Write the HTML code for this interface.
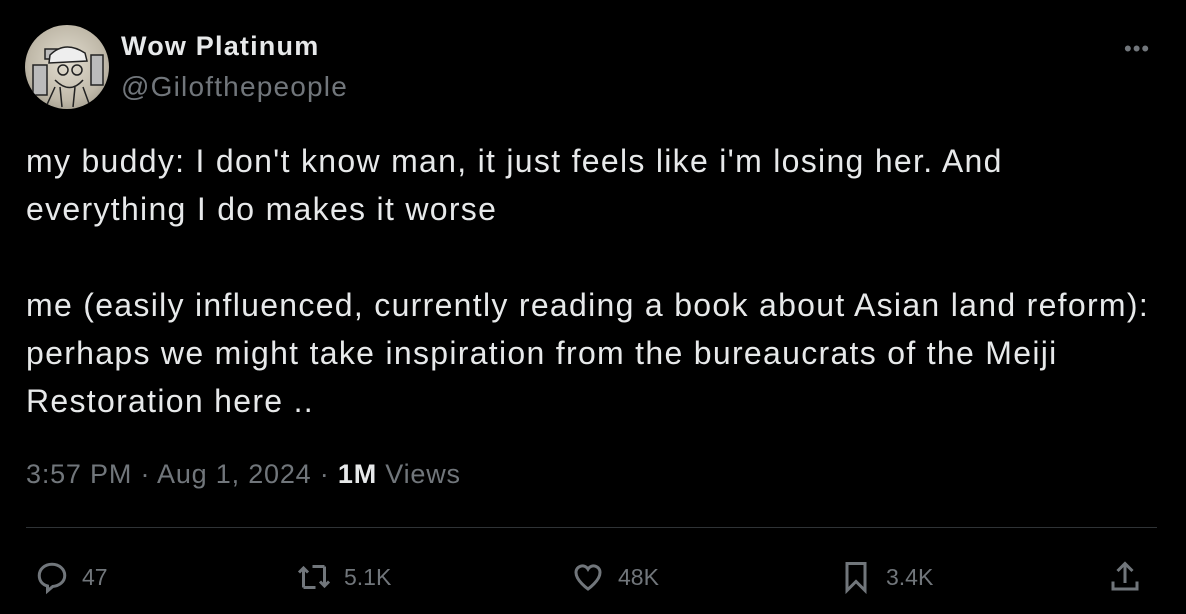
<!DOCTYPE html>
<html><head><meta charset="utf-8"><style>
body{margin:0;background:#000;width:1186px;height:614px;overflow:hidden;font-family:"Liberation Sans",sans-serif;position:relative}
.abs{position:absolute;white-space:nowrap}
.av{left:25px;top:25px;width:84px;height:84px;border-radius:50%;background:radial-gradient(circle at 50% 45%,#e2ddd0,#c0b9a9 60%,#8a8578);overflow:hidden}
.name{left:121px;top:31px;color:#e7e9ea;font-weight:bold;font-size:27px;letter-spacing:1.2px}
.handle{left:121px;top:71px;color:#71767b;font-size:28px;letter-spacing:1.2px}
.txt{left:26px;top:137px;color:#e7e9ea;font-size:32px;line-height:48px;white-space:pre;letter-spacing:1.3px}
.meta{left:26px;top:459px;color:#71767b;font-size:27px;letter-spacing:0.8px}
.meta b{color:#e7e9ea}
.hr{left:26px;top:527px;width:1131px;height:1px;background:#2f3336}
.act{top:559px;color:#71767b;font-size:23px;display:flex;align-items:center;gap:12px}
svg{fill:none;stroke:#71767b;stroke-width:2}
</style></head><body>
<div class="abs av"><svg width="84" height="84" viewBox="0 0 84 84" style="stroke:#222;stroke-width:1.5"><path d="M20 24h20v10H20zM8 40h14v30H8zM66 30h12v30H66z" fill="#bbb"/><path d="M25 30 Q40 15 60 28 L62 36 L24 38Z" fill="#eee"/><circle cx="38" cy="45" r="5"/><circle cx="52" cy="45" r="5"/><path d="M30 55 Q45 70 58 55 M20 84 L30 62 M66 84 L58 62 M35 62l2 20M50 62l-2 20"/></svg></div>
<div class="abs name">Wow Platinum</div>
<div class="abs handle">@Gilofthepeople</div>
<div class="abs" style="left:1124px;top:36px;color:#71767b;font-size:22px;letter-spacing:1px">•••</div>
<div class="abs txt">my buddy: I don't know man, it just feels like i'm losing her. And
everything I do makes it worse

me (easily influenced, currently reading a book about Asian land reform):
perhaps we might take inspiration from the bureaucrats of the Meiji
Restoration here ..</div>
<div class="abs meta">3:57 PM · Aug 1, 2024 · <b>1M</b> Views</div>
<div class="abs hr"></div>
<div class="abs act" style="left:34px"><svg width="36" height="36" viewBox="0 0 24 24"><path d="M12 3.5c4.8 0 8.5 3.3 8.5 7.5s-3.7 7-8 7.3l-3.5 3V18C5.5 17 3.5 14.5 3.5 11c0-4.2 3.7-7.5 8.5-7.5z"/></svg>47</div>
<div class="abs act" style="left:296px"><svg width="36" height="36" viewBox="0 0 24 24"><path d="M5 19V6M2 9l3-3 3 3M5 19h8M19 5v13M16 15l3 3 3-3M19 5h-8"/></svg>5.1K</div>
<div class="abs act" style="left:570px"><svg width="36" height="36" viewBox="0 0 24 24"><path d="M12 20s-8-5.5-8-11a4.3 4.3 0 0 1 8-2.3A4.3 4.3 0 0 1 20 9c0 5.5-8 11-8 11z"/></svg>48K</div>
<div class="abs act" style="left:838px"><svg width="36" height="36" viewBox="0 0 24 24"><path d="M6 3h12v18l-6-6-6 6z"/></svg>3.4K</div>
<div class="abs act" style="left:1107px"><svg width="36" height="36" viewBox="0 0 24 24"><path d="M12 3v13M7 8l5-5 5 5M4 15v5h16v-5"/></svg></div>
</body></html>
